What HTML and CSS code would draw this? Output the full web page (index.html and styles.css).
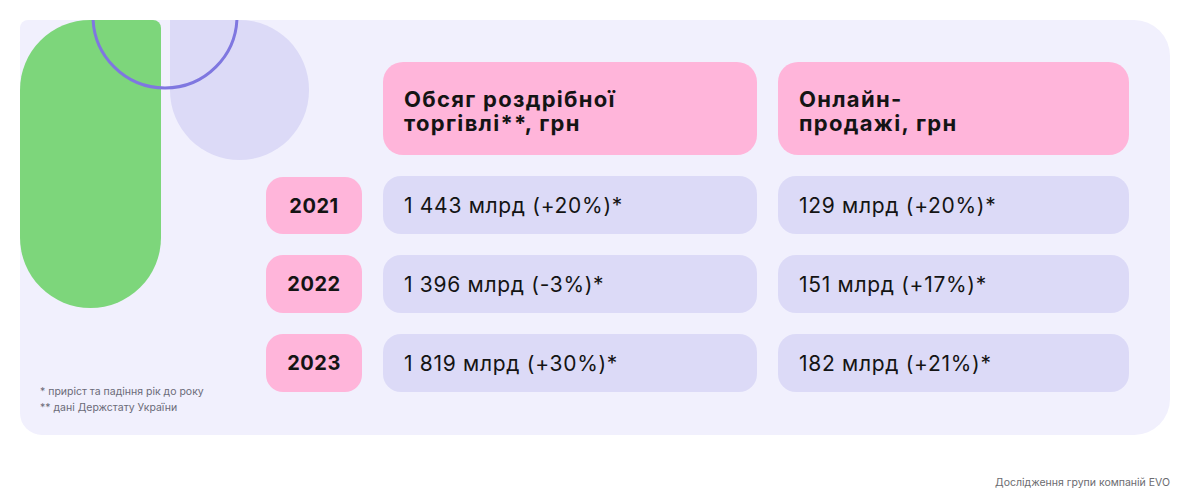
FILE: index.html
```html
<!DOCTYPE html>
<html lang="uk">
<head>
<meta charset="utf-8">
<title>EVO</title>
<link rel="stylesheet" href="styles.css">
</head>
<body>
<main class="page">
  <section class="panel">
    <div class="deco">
      <div class="deco-green"></div>
      <div class="deco-circle"></div>
      <svg class="deco-ring" width="160" height="100" viewBox="0 0 160 100">
        <circle cx="75" cy="-4" r="72" fill="none" stroke="#7f77e0" stroke-width="3"/>
      </svg>
    </div>
    <aside class="notes">
      <p>* приріст та падіння рік до року</p>
      <p>** дані Держстату України</p>
    </aside>
    <div class="table">
      <div class="spacer"></div>
      <div class="cell head">Обсяг роздрібної<br>торгівлі**, грн</div>
      <div class="cell head">Онлайн-<br>продажі, грн</div>

      <div class="cell year">2021</div>
      <div class="cell val">1 443 млрд (+20%)*</div>
      <div class="cell val">129 млрд (+20%)*</div>

      <div class="cell year">2022</div>
      <div class="cell val">1 396 млрд (-3%)*</div>
      <div class="cell val">151 млрд (+17%)*</div>

      <div class="cell year">2023</div>
      <div class="cell val">1 819 млрд (+30%)*</div>
      <div class="cell val">182 млрд (+21%)*</div>
    </div>
  </section>
  <footer class="caption">Дослідження групи компаній EVO</footer>
</main>
</body>
</html>
```
FILE: styles.css
```css
* { box-sizing: border-box; }
html, body { margin: 0; padding: 0; background: #ffffff; }
body {
  font-family: "Inter", "Liberation Sans", sans-serif;
  color: #141414;
  width: 1200px;
  height: 504px;
  overflow: hidden;
}
.page { padding: 20px 30px 0 20px; }
.panel {
  position: relative;
  display: flex;
  width: 1150px;
  height: 415px;
  background: #f1f0fd;
  border-radius: 8px 36px 36px 22px;
  overflow: hidden;
}
.deco { position: absolute; left: 0; top: 0; width: 300px; height: 300px; pointer-events: none; }
.deco-green {
  position: absolute; left: 0; top: 0;
  width: 141px; height: 288px;
  background: #7dd67b;
  border-radius: 70px 8px 70.5px 70.5px;
}
.deco-circle {
  position: absolute; left: 150px; top: 0;
  width: 139px; height: 140px;
  background: #dcdaf7;
  border-radius: 0 70px 70px 70px;
}
.deco-ring { position: absolute; left: 70px; top: 0; }
.notes {
  width: 246px;
  flex: none;
  display: flex;
  flex-direction: column;
  justify-content: flex-end;
  padding: 0 0 19px 20px;
  font-size: 10.5px;
  color: #6b6b78;
  line-height: 16px;
}
.notes p { margin: 0; }
.table {
  display: grid;
  grid-template-columns: 96px 374px 351px;
  grid-template-rows: 93px 58px 58px 58px;
  column-gap: 21px;
  row-gap: 21px;
  padding-top: 42px;
  align-content: start;
}
.table .cell:nth-child(4) { margin-top: 1px; }
.cell {
  display: flex;
  align-items: center;
}
.head {
  background: #ffb5da;
  border-radius: 20px;
  padding: 4px 20px 0 21px;
  font-weight: 700;
  font-size: 22px;
  line-height: 24px;
  letter-spacing: 1.3px;
}
.year {
  background: #ffb5da;
  border-radius: 17px;
  justify-content: center;
  font-weight: 700;
  font-size: 20px;
  letter-spacing: 0.5px;
}
.val {
  background: #dcdaf7;
  border-radius: 18px;
  padding-left: 21px;
  font-size: 21px;
  letter-spacing: 0.7px;
}
.caption {
  text-align: right;
  font-size: 10.5px;
  color: #6b6b70;
  margin-top: 41px;
}
```
